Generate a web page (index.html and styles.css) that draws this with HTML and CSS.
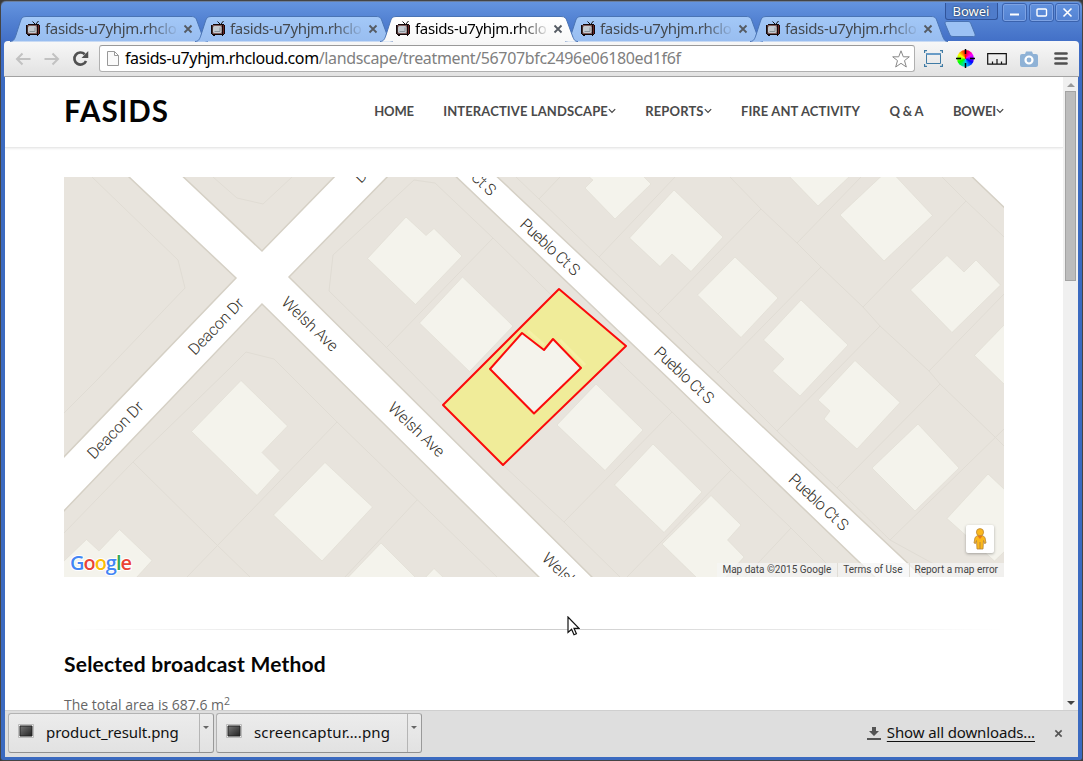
FILE: index.html
```html
<!DOCTYPE html>
<html lang="en">
<head>
<meta charset="utf-8">
<title>FASIDS</title>
<link rel="stylesheet" href="styles.css">
</head>
<body>
<svg class="defs" width="0" height="0">
  <defs>
    <linearGradient id="tabFill" x1="0" y1="0" x2="0" y2="1"><stop offset="0" stop-color="#a3c8f7"/><stop offset="1" stop-color="#98bdf0"/></linearGradient>
    <linearGradient id="tabOn" x1="0" y1="0" x2="0" y2="1"><stop offset="0" stop-color="#ffffff"/><stop offset="1" stop-color="#f8f8f8"/></linearGradient>
    <linearGradient id="thumb" x1="0" y1="0" x2="1" y2="1"><stop offset="0" stop-color="#777"/><stop offset="1" stop-color="#222"/></linearGradient>
    <symbol id="tv" viewBox="0 0 15 16">
      <path d="M9 4 6.500 1.500M10 4 12.500 1" stroke="#111" fill="none"/>
      <path d="M2 4h11v1h1v9h-1v1h-1v1h-1v-1H4v1H2v-1H1v-1H0V5h2z" fill="#120808"/>
      <path d="M12 5h1v9h-1z" fill="#6b2525"/><path d="M1.500 5h9.500v9h-9.500z" fill="#7d5a5a"/>
      <rect x="2" y="6" width="8.500" height="7" rx="1.500" fill="#c3cad0"/><path d="M3.500 11.500h5.500V7.500" stroke="#8a949c" fill="none"/>
    </symbol>
    <symbol id="x" viewBox="0 0 10 10"><path d="M1.500 1.500l7 7m0-7l-7 7" stroke="currentColor" stroke-width="1.800" fill="none"/></symbol>
    <symbol id="tabShape" viewBox="0 0 198 26"><path d="M0 25.500C4 25.500 5 22 6 19L10.500 5C11.500 2 12.500 .5 16 .5H181C185 .5 186 2 187 5L192.500 20C194 24 195 25.500 198 25.500" stroke="#4a74b4"/></symbol>
    <symbol id="chev" viewBox="0 0 8 6"><path d="M.8 1.200 4 4.500 7.200 1.200" stroke="#444" stroke-width="1.200" fill="none"/></symbol>
  </defs>
</svg>
<div class="window">
  <header class="titlebar">
    <nav class="tabs">
      <div class="tab"><svg class="shape"><use href="#tabShape"/></svg><svg class="fav"><use href="#tv"/></svg><span class="tab-title">fasids-u7yhjm.rhclo</span><svg class="close"><use href="#x"/></svg></div>
      <div class="tab"><svg class="shape"><use href="#tabShape"/></svg><svg class="fav"><use href="#tv"/></svg><span class="tab-title">fasids-u7yhjm.rhclo</span><svg class="close"><use href="#x"/></svg></div>
      <div class="tab active"><svg class="shape"><use href="#tabShape"/></svg><svg class="fav"><use href="#tv"/></svg><span class="tab-title">fasids-u7yhjm.rhclo</span><svg class="close"><use href="#x"/></svg></div>
      <div class="tab"><svg class="shape"><use href="#tabShape"/></svg><svg class="fav"><use href="#tv"/></svg><span class="tab-title">fasids-u7yhjm.rhclo</span><svg class="close"><use href="#x"/></svg></div>
      <div class="tab"><svg class="shape"><use href="#tabShape"/></svg><svg class="fav"><use href="#tv"/></svg><span class="tab-title">fasids-u7yhjm.rhclo</span><svg class="close"><use href="#x"/></svg></div>
      <svg class="newtab" viewBox="0 0 32 16"><path d="M3 .5h21c2 0 2.500 1 3 2.500l4 10c.5 1.500 0 2.500-1.500 2.500H9c-2 0-3-1-3.500-2.500L1.200 3C.7 1.500 1 .5 3 .5z" fill="#9cc2f4" stroke="#4a74b4"/></svg>
    </nav>
    <div class="controls">
      <span class="user">Bowei</span>
      <svg class="wbtn" viewBox="0 0 21 15"><path d="M6 9.500h9" stroke="#fff" stroke-width="2"/></svg>
      <svg class="wbtn" viewBox="0 0 21 15"><rect x="6" y="4" width="9.500" height="7" rx="1" fill="none" stroke="#fff" stroke-width="1.400"/></svg>
      <svg class="wbtn" viewBox="0 0 21 15"><path d="M6.500 3.500l8 8m0-8l-8 8" stroke="#fff" stroke-width="1.600"/></svg>
    </div>
  </header>
  <div class="toolbar">
    <svg class="arrow" viewBox="0 0 16 14"><path d="M15.500 7H2M7.500 1.500 2 7l5.500 5.500" fill="none" stroke="#c2c2c2" stroke-width="2"/></svg>
    <svg class="arrow fwd" viewBox="0 0 16 14"><path d="M.5 7H14M8.500 1.500 14 7l-5.500 5.500" fill="none" stroke="#c2c2c2" stroke-width="2"/></svg>
    <svg class="reload" viewBox="0 0 16 16"><path d="M13.200 10.300A5.700 5.700 0 1 1 12 4" fill="none" stroke="#505050" stroke-width="2.500"/><path d="M15.300 1v6.500H9z" fill="#505050"/></svg>
    <div class="omnibox">
      <svg class="page-ico" viewBox="0 0 12 15"><path d="M.5.5h7l4 4v10H.5zM7.500.5v4h4" fill="#fafafa" stroke="#999"/></svg>
      <span class="url"><b>fasids-u7yhjm.rhcloud.com</b><i>/landscape/treatment/56707bfc2496e06180ed1f6f</i></span>
      <svg class="star" viewBox="0 0 18 18"><path d="M9 .8l2.300 6h6L12.500 10.600l1.800 6.400L9 13.300 3.700 17l1.800-6.400L.7 6.800h6z" fill="#fff" stroke="#888" stroke-linejoin="round"/></svg>
    </div>
    <svg class="ext" viewBox="0 0 19 17"><path d="M2.500 3.500h14v10h-14z" fill="none" stroke="#3f7ba5"/><path d="M2.500 3h14v2h-14z" fill="#6a9cc6"/><path d="M.5 3V.5H3M16 .5h2.500V3M18.500 14v2.500H16M3 16.500H.5V14" fill="none" stroke="#3f7ba5" stroke-width="1.300"/></svg>
    <div class="wheel"><svg viewBox="0 0 19 19"><path d="M9.500 0v5M9.500 14v5M0 9.500h5M14 9.500h5" stroke="#000" stroke-width="1.500"/></svg></div>
    <svg class="ruler" viewBox="0 0 20 12"><path d="M.7.700h18.600v10.500H.7zM5.500 11V8.500M10 11V6M14.500 11V8.500" fill="none" stroke="#111" stroke-width="1.200"/></svg>
    <svg class="camera" viewBox="0 0 18 16"><path d="M2 3h3l1-2.500h6L13 3h3q2 0 2 2v9q0 2-2 2H2q-2 0-2-2V5q0-2 2-2z" fill="#8fb2d6"/><circle cx="9" cy="9" r="3.500" fill="none" stroke="#fff" stroke-width="2.200"/></svg>
    <svg class="menu" viewBox="0 0 14 13"><path d="M1.500 1.500h11M1.500 6.500h11M1.500 11.500h11" stroke="#505050" stroke-width="2.700" stroke-linecap="round"/></svg>
  </div>
  <div class="viewport">
    <main class="page">
      <div class="site-head">
        <div class="logo">FASIDS</div>
        <nav class="nav">
          <a class="tight">HOME</a>
          <a>INTERACTIVE LANDSCAPE<svg><use href="#chev"/></svg></a>
          <a>REPORTS<svg><use href="#chev"/></svg></a>
          <a>FIRE ANT ACTIVITY</a>
          <a class="tight">Q &amp; A</a>
          <a class="tight">BOWEI<svg><use href="#chev"/></svg></a>
        </nav>
      </div>
      <section class="map">
        <svg class="map-art" viewBox="64 177 940 400">
          <rect x="64" y="177" width="940" height="400" fill="#fff"/>
          <g fill="#e8e4dd" stroke="#d5d0c5" stroke-width="1.500">
            <path d="M60 170H121.600L236 278 60 461z"/>
            <path d="M176 170 262 251 341 170z"/>
            <path d="M394 170 289 277 383 370 600 585H883L700 409 670 380 449 170z"/>
            <path d="M262 304 60 515V585H547L380 420z"/>
            <path d="M490 170 713 380 931 585H1010V213L965 170z"/>
          </g>
          <g class="parcels">
            <path d="M92 177 178 260 185 288 97 380 64 413M213 177 237 198 263 204 292 177"/>
            <path d="M720 459 731 470 791 528 840 577M628 370 672 412 720 459M628 370 493 238 435 183 414 180 400 193 333 255 329 291 386 347 503 465 564 522 620 577M493 238 387 347M672 412 564 522M731 470 627 577M791 528 745 577"/>
            <path d="M64 533 133 462 228 370 246 352 274 359 337 422 400 483 497 577M133 462 217 545 250 577M337 422 187 577M417 500 345 577"/>
            <path d="M516 177 539 199 599 257 658 314 718 372 777 431 837 488 890 540 932 563 960 577M539 199 560 177M599 257 675 177M658 314 761 209M717 373 821 267M777 431 880 326M837 488 940 384M890 540 1004 429"/>
            <path d="M730 177 761 209 797 243 821 267 863 307 880 326 929 371 940 384 995 437 1004 446M797 243 861 177M863 307 966 201M929 371 1004 294M942 177 966 201 1004 237"/>
          </g>
          <g class="houses">
            <path d="M241 380.500 287.500 426 262 452.500 280 470.500 257 495.500 191.500 431.500z"/>
            <path d="M325 462.500 372.500 507 322 561 273.500 515z"/>
            <path d="M119.500 529.500 152 560.500 136 578H63V562L86.500 539.500 99 551z"/>
            <path d="M381 543 416 578H347.500z"/><path d="M425 578 434 568.500 444 578z"/>
            <path d="M406 217 426 235.500 434 228.500 462 256 415.500 304.500 367.500 258.500z"/>
            <path d="M462.500 277 513 326 469.500 371.500 419.500 323z"/>
            <path d="M588 176 593 180 585 188 615 219 651 184 643 176z"/>
            <path d="M674 190 723 237 691 271.500 672 254 660 266.500 629.500 238z"/>
            <path d="M735 257 778 298 741 337.500 697.500 295z"/>
            <path d="M801 300 848 345 800 396 772.500 371 784 359 763.500 340z"/>
            <path d="M789 176 818 206 850 176z"/>
            <path d="M881.500 176H895.500L932.500 215.500 884 261 840 215z"/>
            <path d="M947 255.500 964 272 976 260 1000.500 285 952 332.500 910.500 290z"/>
            <path d="M1005 324 974.500 355.500 1005 385z"/>
            <path d="M855 360.500 900 402.500 857 449 824 419 830 411 818 400z"/>
            <path d="M918 424 959 468 915 511 872 468z"/>
            <path d="M988 474 1005 490V551L994.500 561 947 518.500z"/>
            <path d="M596 384 643 430 605 470.500 557 425z"/>
            <path d="M653 444 702 492 664 532.500 614.500 485z"/>
            <path d="M711 495.500 741 525 727.500 540 744 557 725 578H697L662 544z"/>
          </g>
          <path d="M559 289 626 346 503 465 443 405z" fill="#f0ec99"/>
          <path d="M528 331 544 345M560 340 585 365" stroke="#f5f1a5" stroke-width="3"/>
          <path d="M522 333 544 350 553 339 581 368 534 413.500 490 369z" fill="#f4f3ec"/>
          <path d="M559 289 626 346 503 465 443 405zM522 333 544 350 553 339 581 368 534 413.500 490 369z" fill="none" stroke="#fb0b0b" stroke-width="2" stroke-linejoin="round"/>
          <g class="streets">
            <text transform="translate(195 356) rotate(-46)" textLength="72">Deacon Dr</text>
            <text transform="translate(94 460) rotate(-46)" textLength="73">Deacon Dr</text>
            <text transform="translate(361 184) rotate(-46)" textLength="72">Deacon Dr</text>
            <text transform="translate(280.500 303.500) rotate(43.500)" textLength="71">Welsh Ave</text>
            <text transform="translate(387 409) rotate(43.500)" textLength="71">Welsh Ave</text>
            <text transform="translate(541 559.500) rotate(43.500)" textLength="71">Welsh Ave</text>
            <text transform="translate(435 145.500) rotate(43)" textLength="75">Pueblo Ct S</text>
            <text transform="translate(519 225.500) rotate(43)" textLength="75">Pueblo Ct S</text>
            <text transform="translate(653 353.500) rotate(43)" textLength="75">Pueblo Ct S</text>
            <text transform="translate(787.500 480.500) rotate(43)" textLength="75">Pueblo Ct S</text>
          </g>
          <text class="google" x="70" y="570" textLength="62"><tspan fill="#4285f4">G</tspan><tspan fill="#ea4335">o</tspan><tspan fill="#fbbc05">o</tspan><tspan fill="#4285f4">g</tspan><tspan fill="#34a853">l</tspan><tspan fill="#ea4335">e</tspan></text>
        </svg>
        <div class="pegman"><svg viewBox="0 0 14 22"><path d="M4.500 7.500h5l2.500 2 1 5.500-1.500.5-1-3-.5 8.500H4l-.5-8.500-1 3L1 15l1-5.500z" fill="#fbb81c" stroke="#b8853a" stroke-width=".8"/><circle cx="7" cy="4.200" r="3.600" fill="#fbb81c" stroke="#b8853a" stroke-width=".8"/><path d="M4.500 8 7 11l2.500-3z" fill="#e5771b"/><path d="M7 14v7" stroke="#b8853a"/></svg></div>
        <div class="credits"><span>Map data ©2015 Google</span><span>Terms of Use</span><span>Report a map error</span></div>
      </section>
      <div class="rule"></div>
      <h2>Selected broadcast Method</h2>
      <p>The total area is 687.6 m<sup>2</sup></p>
    </main>
    <div class="scroll"><i class="up"></i><div class="thumb"></div><i class="down"></i></div>
  </div>
  <footer class="shelf">
    <div class="dl"><svg class="thumb-ico" viewBox="0 0 16 14"><path d="M.5.5h15v13H.5z" fill="#eee" stroke="#bbb"/><path d="M2 2h12v10H2z" fill="url(#thumb)" stroke="#222"/></svg><span class="n1">product_result.png</span><div class="drop"><i></i></div></div>
    <div class="dl"><svg class="thumb-ico" viewBox="0 0 16 14"><path d="M.5.5h15v13H.5z" fill="#eee" stroke="#bbb"/><path d="M2 2h12v10H2z" fill="url(#thumb)" stroke="#222"/></svg><span class="n2">screencaptur….png</span><div class="drop"><i></i></div></div>
    <svg class="dl-ico" viewBox="0 0 14 13"><path d="M5 0h4v4h3L7 9 2 4h3zM0 11h14v2H0z" fill="#555"/></svg>
    <a class="all">Show all downloads...</a>
    <svg class="shelf-x"><use href="#x"/></svg>
  </footer>
</div>
<svg class="cursor" viewBox="0 0 13 20"><path d="M1 1v15.500l3.600-3.300L7 18.800l2.400-1L7 12.300h5z" fill="#fff" stroke="#111" stroke-width="1.200"/></svg>
</body>
</html>
```
FILE: styles.css
```css
* { box-sizing: border-box; }
body { margin: 0; background: #3a3a3a; overflow: hidden; }
svg { display: block; flex: none; }
.defs { position: absolute; }
.window {
  width: 1083px; height: 761px; display: flex; flex-direction: column;
  padding: 0 4px 3px 4px; border: 1px solid #444; border-radius: 6px 6px 3px 3px;
  background: linear-gradient(#6595e0, #5483d3 18px, #3f6cc4 45px, #3b6ac0 90px);
  box-shadow: inset 0 1px #6b7f9f;
  font-family: "Noto Sans", sans-serif; position: relative;
}
.titlebar { height: 40px; display: flex; justify-content: space-between; align-items: flex-start; flex: none; }
.tabs { display: flex; padding: 15px 0 0 5px; flex: none; }
.tab { width: 185px; flex: none; height: 25px; position: relative; display: flex; align-items: center; padding-left: 16px; color: #44494f; }
.shape { position: absolute; left: 0; top: 0; width: 198px; height: 26px; fill: url(#tabFill); }
.active .shape { fill: url(#tabOn); }
.active { z-index: 2; color: #000; }
.fav { width: 15px; height: 16px; position: relative; top: -1px; }
.tab-title {
  position: relative; margin-left: 4px; width: 133px; flex: none; white-space: nowrap; font-size: 15px; line-height: 22px;
  letter-spacing: -.35px; top: -1px;
  -webkit-mask-image: linear-gradient(90deg, #000 78%, transparent 101%);
  mask-image: linear-gradient(90deg, #000 78%, transparent 101%);
}
.close { position: relative; width: 10px; height: 10px; margin-left: 5px; color: #555b63; }
.newtab { width: 32px; height: 16px; margin: 5px 0 0 9px; }
.controls { display: flex; flex: none; gap: 3.500px; padding-top: 3px; margin: 0 -1px 0 -80px; position: relative; }
.user {
  width: 53px; height: 17px; margin: -1px 2px 0 0; border: 1px solid #31549a; border-top: 0; border-radius: 0 0 3px 3px; background: #4f7ccb;
  color: #fff; font-size: 13px; line-height: 17px; text-align: center; text-shadow: 0 0 2px #122;
}
.wbtn { width: 23px; height: 17px; border: 1px solid #7da2e3; border-radius: 2px; outline: 1px solid #3a62ad; }
.toolbar {
  height: 36px; flex: none; display: flex; align-items: center; margin: 0 -1px; padding: 0 11px 0 11px;
  background: linear-gradient(#f8f8f8, #e2e2e2); border-bottom: 1px solid #a2a2a2; border-radius: 4px 4px 0 0;
}
.arrow { width: 16px; height: 14px; }
.fwd { margin-left: 13px; }
.reload { width: 17px; height: 17px; margin: 0 1px 0 12px; }
.omnibox { width: 816px; flex: none; height: 27px; margin-left: 9px; background: #fff; border: 1px solid #b0b0b0; border-top-color: #999; border-radius: 3px; display: flex; align-items: center; padding: 0 4px 0 7px; }
.page-ico { width: 12px; height: 15px; }
.url { margin-left: 6px; font-size: 16px; white-space: nowrap; flex: 1; line-height: 24px; position: relative; top: -1px; }
.url b { font-weight: 400; letter-spacing: -.4px; }
.url i { font-style: normal; color: #808080; letter-spacing: -.35px; }
.star { width: 18px; height: 18px; }
.ext { width: 19px; height: 17px; margin-left: 8.500px; }
.wheel { width: 17px; flex: none; height: 17px; margin: 0 1px 0 14px; border-radius: 50%; background: conic-gradient(#f00, #f0f 60deg, #00f 120deg, #0cf 175deg, #0f0 240deg, #ff0 300deg, #f00); }
.wheel svg { width: 19px; height: 19px; margin: -1px; }
.ruler { width: 20px; height: 12px; margin-left: 12px; }
.camera { width: 18px; height: 16px; margin-left: 13px; }
.menu { width: 14px; height: 13px; margin-left: 16px; }
.viewport { height: 633px; flex: none; display: flex; background: #fff; overflow: hidden; }
.page { flex: 1; overflow: hidden; height: 633px; }
.site-head { height: 71px; display: flex; align-items: center; border-bottom: 1px solid #e9e9e9; box-shadow: 0 1px 2px #eee; padding: 0 59px; justify-content: space-between; }
.logo { font: 700 29.500px/40px Lato, sans-serif; color: #040404; letter-spacing: 1px; padding-bottom: 2px; }
.nav { display: flex; gap: 29.400px; font: 700 13px/20px Lato, sans-serif; color: #4a4a4a; letter-spacing: .12px; padding-bottom: 2px; }
.nav .tight { letter-spacing: -.15px; }
.nav a { display: flex; align-items: center; }
.nav svg { width: 8px; height: 6px; }
.map { position: relative; margin: 29px 0 0 59px; width: 940px; height: 400px; }
.map-art { width: 940px; height: 400px; }
.parcels { fill: none; stroke: #e0dcd4; stroke-width: 1; }
.houses { fill: #f4f3ec; stroke: #dfdcd2; stroke-width: .6; }
.streets { font: 300 16px Roboto, sans-serif; fill: #333029; }
.google { font: 600 20px "Open Sans", sans-serif; stroke: #fff; stroke-width: 2px; paint-order: stroke; }
.pegman { position: absolute; right: 10px; bottom: 24px; width: 28px; height: 28px; background: #fff; border-radius: 2px; box-shadow: 0 1px 3px rgba(0,0,0,.3); display: flex; align-items: center; justify-content: center; }
.pegman svg { width: 14px; height: 22px; }
.credits { position: absolute; right: 0; bottom: 0; height: 14px; display: flex; background: rgba(245,245,245,.7); font: 10px/14px Roboto, sans-serif; color: #444; }
.credits span { padding: 0 6px 0 5px; white-space: nowrap; }
.credits span + span { border-left: 1px solid #e0ddd6; }
.rule { height: 1px; margin: 52px 59px 0; width: 940px; background: linear-gradient(90deg, transparent, #ccc 50%, transparent); }
h2 { margin: 19px 0 0 59px; font: 700 21px/30px Lato, sans-serif; letter-spacing: .22px; color: #050505; }
p { margin: 11px 0 0 59px; font: 14px/30px "Open Sans", sans-serif; color: #666; }
sup { font-size: 10.500px; line-height: 0; position: relative; vertical-align: baseline; top: -5px; }
.scroll { width: 15px; background: #f0f0f0; display: flex; flex-direction: column; align-items: center; }
.scroll i { width: 0; height: 0; border: 4px solid transparent; }
.scroll .up { border-top: 0; border-bottom-color: #999; margin: 6px 0 4px; }
.scroll .down { border-bottom: 0; border-top: 4px solid #444; margin: auto 0 5px; }
.thumb { width: 11px; height: 190px; background: #bcbcbc; border: 1px solid #a3a3a3; }
.shelf { height: 47px; flex: none; background: #dedede; border-top: 1px solid #cfcfcf; display: flex; align-items: center; padding: 0 15px 2px 3px; font-size: 15px; color: #111; }
.dl { width: 206px; height: 40px; margin-right: 2px; flex: none; border: 1px solid #999; border-color: #b3b3b3 #999 #909090 #b3b3b3; border-radius: 3px; background: linear-gradient(#ececec, #e2e2e2); display: flex; align-items: center; padding-left: 9px; }
.thumb-ico { width: 16px; height: 14px; margin-bottom: 4px; }
.dl span { margin: 0 0 3px 12px; white-space: nowrap; }
.n1 { letter-spacing: -.06px; }
.n2 { letter-spacing: .16px; }
.drop { width: 14px; height: 38px; margin-left: auto; border-left: 1px solid #b5b5b5; padding: 12px 0 0 3px; }
.drop i { display: block; width: 0; height: 0; border: 3px solid transparent; border-top-color: #666; }
.dl-ico { width: 14px; height: 13px; margin-left: auto; }
.all { margin: 0 0 3px 6px; text-decoration: underline; text-underline-offset: 3px; letter-spacing: -.13px; }
.shelf-x { width: 9px; height: 9px; margin-left: 19px; color: #555; }
.cursor { position: absolute; left: 567px; top: 616px; width: 13px; height: 20px; }
```
